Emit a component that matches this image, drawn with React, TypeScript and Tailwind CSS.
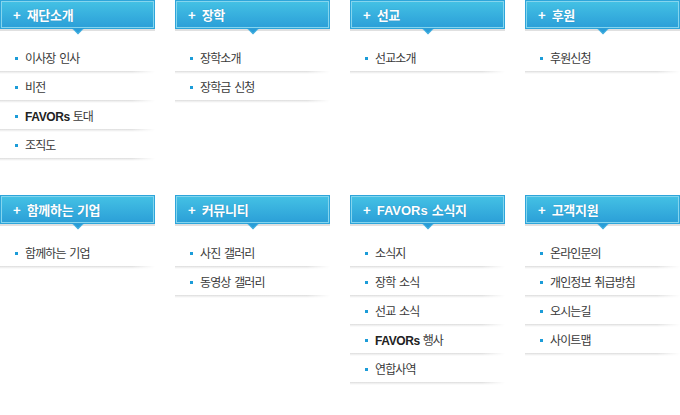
import React from 'react';

type Item = { bold?: string; text: string };
type Section = { title: string; boldTitle?: string; items: Item[] };

const SECTIONS: Section[] = [
  {
    title: '재단소개',
    items: [
      { text: '이사장 인사' },
      { text: '비전' },
      { bold: 'FAVORs', text: '토대' },
      { text: '조직도' },
    ],
  },
  { title: '장학', items: [{ text: '장학소개' }, { text: '장학금 신청' }] },
  { title: '선교', items: [{ text: '선교소개' }] },
  { title: '후원', items: [{ text: '후원신청' }] },
  { title: '함께하는 기업', items: [{ text: '함께하는 기업' }] },
  { title: '커뮤니티', items: [{ text: '사진 갤러리' }, { text: '동영상 갤러리' }] },
  {
    title: '소식지',
    boldTitle: 'FAVORs',
    items: [
      { text: '소식지' },
      { text: '장학 소식' },
      { text: '선교 소식' },
      { bold: 'FAVORs', text: '행사' },
      { text: '연합사역' },
    ],
  },
  {
    title: '고객지원',
    items: [
      { text: '온라인문의' },
      { text: '개인정보 취급방침' },
      { text: '오시는길' },
      { text: '사이트맵' },
    ],
  },
];

const FONT = "font-['Noto_Sans_CJK_KR','Noto_Sans',sans-serif]";

const Header = ({ section }: { section: Section }) => (
  <div className="relative">
    <div className="flex h-[29px] items-center bg-gradient-to-b from-[#45c3e5] to-[#2a9dd7] pl-[13px] text-white shadow-[inset_0_0_0_1px_#2ea5da,inset_0_0_0_2px_#84d5ee]">
      <span className="mr-[6px] text-[13px] font-bold leading-none">+</span>
      <span className="text-[13px] font-bold leading-none tracking-[-0.3px] [word-spacing:1px] [text-shadow:0_0_1px_rgba(0,80,140,0.4)]">
        {section.boldTitle && <span className="mr-[4px] font-['Liberation_Sans',sans-serif] tracking-[0px]">{section.boldTitle}</span>}
        {section.title}
      </span>
    </div>
    <div className="h-[2px] bg-[#e0e0e0]" />
    <svg className="absolute left-1/2 top-[28px] -translate-x-1/2" width="13" height="7" viewBox="0 0 13 7">
      <polygon points="0,0 13,0 6.5,6.5" fill="#2a9dd7" />
      <polyline points="1.5,1 6.5,5.5 11.5,1" fill="none" stroke="#5fc2e8" strokeWidth="0.8" />
    </svg>
  </div>
);

const Row = ({ item }: { item: Item }) => (
  <li>
    <div className="flex h-[26px] items-center pl-[15px] text-[12px] text-[#3a3a3a]">
      <span className="mr-[7px] h-[3px] w-[3px] bg-[#1c9cd8]" />
      <span className="tracking-[-0.9px] [word-spacing:2px]">
        {item.bold && <span className="mr-[3px] font-['Liberation_Sans',sans-serif] font-bold tracking-[-0.4px] text-[#222]">{item.bold}</span>}
        {item.text}
      </span>
    </div>
    <div className="h-[3px] bg-gradient-to-b from-[#dcdcdc] via-[#f0f0f0] to-white [mask-image:linear-gradient(to_right,black_85%,transparent)]" />
  </li>
);

export default function App() {
  return (
    <div className={`min-h-[415px] w-[680px] bg-white ${FONT}`}>
      <div className="grid grid-cols-[repeat(4,155px)] gap-x-[20px] gap-y-[34px]">
        {SECTIONS.map((s) => (
          <div key={s.title}>
            <Header section={s} />
            <ul className="mt-[14px]">
              {s.items.map((it, i) => (
                <Row key={i} item={it} />
              ))}
            </ul>
          </div>
        ))}
      </div>
    </div>
  );
}
